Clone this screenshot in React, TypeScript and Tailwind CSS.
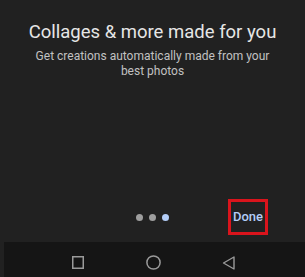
import React from "react";

export default function App() {
  return (
    <div
      className="w-[305px] h-[277px] bg-[#212121] flex flex-col overflow-hidden"
      style={{ fontFamily: "Roboto, 'Noto Sans', sans-serif" }}
    >
      <div className="pt-[21px] flex flex-col items-center">
        <h1 className="text-[18.5px] leading-[22px] text-[#e6e6e6] font-normal">
          Collages &amp; more made for you
        </h1>
        <p className="mt-[6px] w-[250px] text-center text-[12px] leading-[15px] text-[#c2c2c2]">
          Get creations automatically made from your best photos
        </p>
      </div>
      <div className="flex-1" />
      <div className="grid grid-cols-[1fr_auto_1fr] items-center h-[36px]">
        <div />
        <div className="flex items-center gap-[6px]">
          <span className="w-[7px] h-[7px] rounded-full bg-[#9e9e9e]" />
          <span className="w-[7px] h-[7px] rounded-full bg-[#9e9e9e]" />
          <span className="w-[7px] h-[7px] rounded-full bg-[#b3cdf7]" />
        </div>
        <div className="flex justify-end pr-[37px]">
          <div className="w-[40px] h-[36px] border-[3px] border-[#d9141c] flex items-center justify-center">
            <span className="text-[13px] font-medium text-[#b3cdf7]">Done</span>
          </div>
        </div>
      </div>
      <div className="mt-[7px] ml-[4px] h-[35px] bg-[#151515] flex items-center pt-[6px]">
        <div className="flex items-center w-full">
          <div className="w-[68px]" />
          <svg width="12" height="13" viewBox="0 0 12 13">
            <rect x="0.75" y="0.75" width="10.5" height="11.5" fill="none" stroke="#9a9a9a" strokeWidth="1.5" />
          </svg>
          <div className="w-[62px]" />
          <svg width="15" height="15" viewBox="0 0 15 15">
            <circle cx="7.5" cy="7.5" r="6.6" fill="none" stroke="#9a9a9a" strokeWidth="1.5" />
          </svg>
          <div className="w-[61px]" />
          <svg width="13" height="14" viewBox="0 0 13 14">
            <path d="M12 1 L1.5 7 L12 13 Z" fill="none" stroke="#9a9a9a" strokeWidth="1.4" strokeLinejoin="round" />
          </svg>
        </div>
      </div>
    </div>
  );
}
